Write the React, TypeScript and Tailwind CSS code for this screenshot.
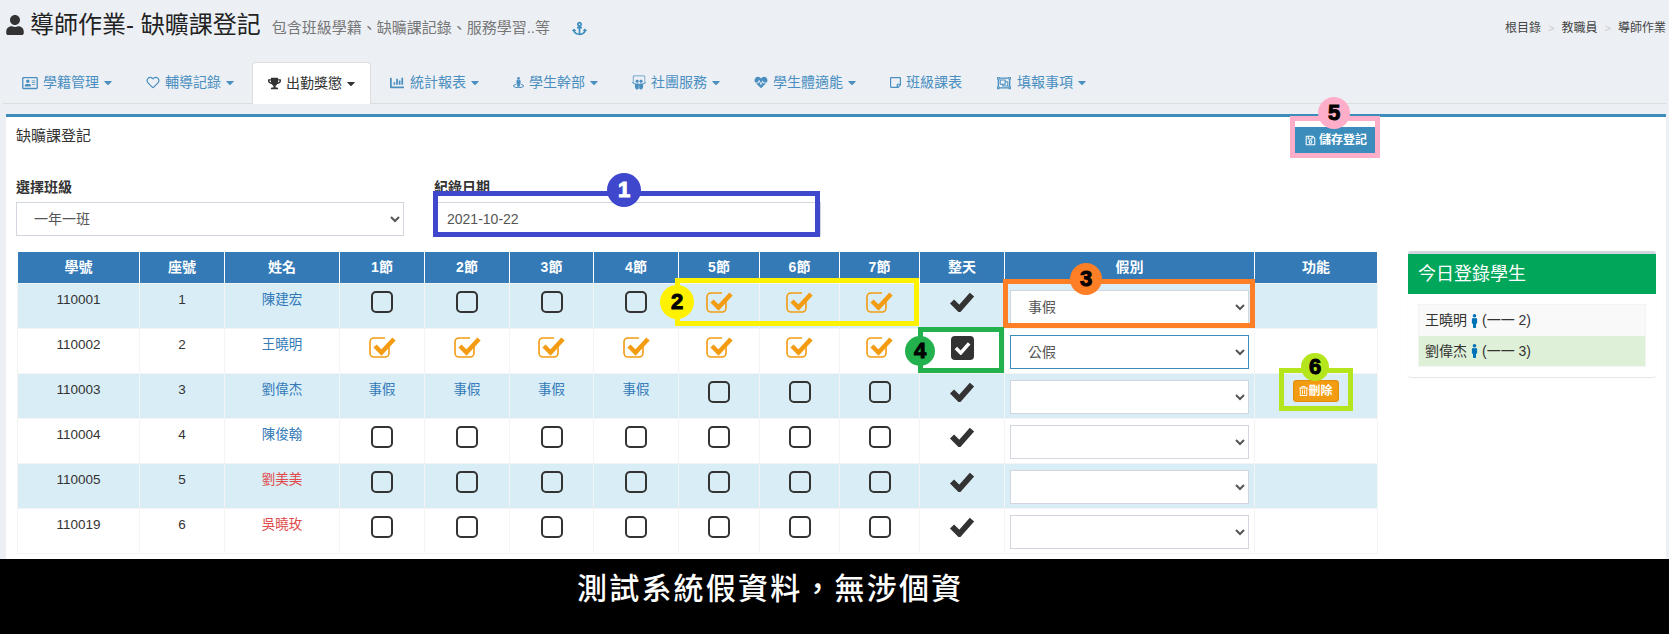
import React from "react";
import {
  FaUser, FaAnchor, FaRegAddressCard, FaRegHeart, FaTrophy, FaChartBar, FaStreetView, FaSlideshare,
  FaHeartbeat, FaRegStickyNote, FaRegObjectGroup, FaCaretDown, FaRegSave, FaRegTrashAlt, FaMale,
} from "react-icons/fa";

const widths = [122, 85, 115, 85, 85, 84, 85, 81, 80, 80, 85, 250, 123];
const heads = ["學號", "座號", "姓名", "1節", "2節", "3節", "4節", "5節", "6節", "7節", "整天", "假別", "功能"];

type Row = { id: string; seat: string; name: string; red?: boolean; cells: (0 | 1 | 2)[]; full?: boolean; leave: string; focus?: boolean; del?: boolean };
const rows: Row[] = [
  { id: "110001", seat: "1", name: "陳建宏", cells: [0, 0, 0, 0, 1, 1, 1], leave: "事假" },
  { id: "110002", seat: "2", name: "王曉明", cells: [1, 1, 1, 1, 1, 1, 1], full: true, leave: "公假", focus: true },
  { id: "110003", seat: "3", name: "劉偉杰", cells: [2, 2, 2, 2, 0, 0, 0], leave: "", del: true },
  { id: "110004", seat: "4", name: "陳俊翰", cells: [0, 0, 0, 0, 0, 0, 0], leave: "" },
  { id: "110005", seat: "5", name: "劉美美", red: true, cells: [0, 0, 0, 0, 0, 0, 0], leave: "" },
  { id: "110019", seat: "6", name: "吳曉玫", red: true, cells: [0, 0, 0, 0, 0, 0, 0], leave: "" },
];

function Box() {
  return <span className="block mx-auto w-[22px] h-[22px] rounded-[5px] border-2 border-[#333333]" />;
}
function Ticked() {
  return (
    <svg width="27" height="23" viewBox="0 0 27 23" fill="none" className="block mx-auto">
      <path d="M20 10.5V17a4 4 0 0 1-4 4H5a4 4 0 0 1-4-4V6a4 4 0 0 1 4-4h11" stroke="#f39c12" strokeWidth="1.6" />
      <path d="M6 10l6.500 6.500L25 3" stroke="#f39c12" strokeWidth="4.500" />
    </svg>
  );
}
function BigCheck() {
  return (
    <svg width="26" height="21" viewBox="0 0 24 20" fill="none" className="block mx-auto">
      <path d="M2.500 10l7 7L21.500 3.500" stroke="#333333" strokeWidth="5.500" />
    </svg>
  );
}
function Tab({ icon, label, caret = true, active = false }: { icon: React.ReactNode; label: string; caret?: boolean; active?: boolean }) {
  return (
    <div
      className={
        active
          ? "flex items-center h-[42px] px-[15px] gap-[5px] bg-white rounded-t-[4px] border border-b-0 border-[#dddddd] text-[#333333] -mb-px -mx-px"
          : "flex items-center h-[41px] px-[15px] gap-[5px] text-[#4b8fc0]"
      }
    >
      <span className="flex items-center justify-center">{icon}</span>
      <span className="text-[14px] whitespace-nowrap">{label}</span>
      {caret && <FaCaretDown className="w-[8px] h-[13px]" />}
    </div>
  );
}
function Badge({ className, text, textClass = "text-black" }: { className: string; text: string; textClass?: string }) {
  return (
    <div className={"absolute rounded-full flex items-center justify-center font-bold text-[22px] leading-none [-webkit-text-stroke:1px] " + textClass + " " + className}>
      {text}
    </div>
  );
}

export default function App() {
  return (
    <div className="relative w-[1669px] h-[634px] overflow-hidden flex flex-col bg-[#ecf0f5] text-[#333333] font-['Liberation_Sans','Noto_Sans_CJK_TC',sans-serif]">
      <div className="h-[559px] overflow-hidden">
        <header className="flex items-start justify-between h-[62px] pl-[6px] pr-[3px]">
          <div className="flex items-baseline pt-[10px]">
            <FaUser className="w-[18px] h-[20px] self-center mr-[6px]" />
            <h1 className="text-[24px] leading-[30px] text-[#222222]">導師作業- 缺曠課登記</h1>
            <span className="text-[15px] text-[#777777] ml-[11px]">包含班級學籍、缺曠課記錄、服務學習..等</span>
            <FaAnchor className="w-[15px] h-[15px] ml-[22px] text-[#3c8dbc] self-center mt-[6px]" />
          </div>
          <div className="flex items-center text-[12px] pt-[19px] text-[#444444]">
            <span>根目錄</span>
            <span className="text-[#cccccc] mx-[7px] text-[11px]">&gt;</span>
            <span>教職員</span>
            <span className="text-[#cccccc] mx-[7px] text-[11px]">&gt;</span>
            <span>導師作業</span>
          </div>
        </header>

        <nav className="flex items-end gap-[4px] h-[42px] mx-[3px] pl-[4px] border-b border-[#dddddd]">
          <Tab icon={<FaRegAddressCard className="w-[16px] h-[14px]" />} label="學籍管理" />
          <Tab icon={<FaRegHeart className="w-[14px] h-[13px]" />} label="輔導記錄" />
          <Tab active icon={<FaTrophy className="w-[13px] h-[13px]" />} label="出勤獎懲" />
          <Tab icon={<FaChartBar className="w-[16px] h-[14px]" />} label="統計報表" />
          <Tab icon={<FaStreetView className="w-[11px] h-[15px]" />} label="學生幹部" />
          <Tab icon={<FaSlideshare className="w-[14px] h-[15px]" />} label="社團服務" />
          <Tab icon={<FaHeartbeat className="w-[14px] h-[13px]" />} label="學生體適能" />
          <Tab caret={false} icon={<FaRegStickyNote className="w-[11px] h-[13px]" />} label="班級課表" />
          <Tab icon={<FaRegObjectGroup className="w-[16px] h-[14px]" />} label="填報事項" />
        </nav>

        <main className="mt-[10px] ml-[6px] w-[1660px] h-[445px] bg-white border-t-[3px] border-[#3c8dbc] flex pl-[10px]">
          <div className="w-[1362px] shrink-0">
            <div className="flex items-start justify-between w-[1359px] pt-[10px] h-[36px]">
              <div className="text-[15px] leading-[18px] text-[#333333]">缺曠課登記</div>
              <button className="flex items-center justify-start pl-[10px] gap-[3px] w-[80px] h-[26px] bg-[#3c8dbc] text-white text-[12px] font-bold">
                <FaRegSave className="w-[11px] h-[11px]" />
                儲存登記
              </button>
            </div>
            <div className="flex gap-[30px] mt-[25px]">
              <label className="block w-[388px]">
                <div className="text-[14px] leading-[18px] font-bold mb-[6px]">選擇班級</div>
                <select defaultValue="一年一班" className="w-full h-[34px] border border-[#d2d6de] bg-white text-[14px] text-[#555555] pl-[13px]">
                  <option>一年一班</option>
                </select>
              </label>
              <label className="block w-[387px]">
                <div className="text-[14px] leading-[18px] font-bold mb-[6px]">紀錄日期</div>
                <input readOnly value="2021-10-22" className="w-full h-[34px] border border-[#d2d6de] bg-white text-[14px] text-[#555555] pl-[12px]" />
              </label>
            </div>
            <table className="mt-[16px] ml-px table-fixed border-collapse w-[1360px] text-[13.500px] text-center">
              <colgroup>
                {widths.map((w, i) => (
                  <col key={i} width={w} />
                ))}
              </colgroup>
              <thead>
                <tr className="h-[31px] bg-[#337ab7] text-white">
                  {heads.map((h) => (
                    <th key={h} className="border-x border-white font-bold text-[14px] p-0">
                      {h}
                    </th>
                  ))}
                </tr>
              </thead>
              <tbody>
                {rows.map((r, i) => (
                  <tr key={r.id} className={i % 2 === 0 ? "h-[45px] bg-[#d9edf7]" : "h-[45px] bg-white"}>
                    <td className="border border-[#f4f4f4] align-top pt-[7px] leading-[18px]">{r.id}</td>
                    <td className="border border-[#f4f4f4] align-top pt-[7px] leading-[18px]">{r.seat}</td>
                    <td className={"border border-[#f4f4f4] align-top pt-[7px] leading-[18px] " + (r.red ? "text-[#e04b4b]" : "text-[#337ab7]")}>{r.name}</td>
                    {r.cells.map((c, k) => (
                      <td key={k} className="border border-[#f4f4f4] align-top leading-[18px] text-[#337ab7] pt-[7px]">
                        {c === 0 ? <Box /> : c === 1 ? <Ticked /> : "事假"}
                      </td>
                    ))}
                    <td className="border border-[#f4f4f4] align-top pt-[7px]">
                      {r.full ? (
                        <span className="flex items-center justify-center mx-auto w-[23px] h-[24px] rounded-[4px] bg-[#333333]">
                          <svg width="17" height="14" viewBox="0 0 24 20" fill="none">
                            <path d="M2.500 10l7 7L21.500 3.500" stroke="#ffffff" strokeWidth="5" />
                          </svg>
                        </span>
                      ) : (
                        <BigCheck />
                      )}
                    </td>
                    <td className="border border-[#f4f4f4] align-top pt-[6px] px-[5px]">
                      <select
                        defaultValue={r.leave}
                        className={"w-[239px] h-[34px] block border bg-white text-[14px] text-[#555555] pl-[13px] " + (r.focus ? "border-[#3c8dbc]" : "border-[#d2d6de]")}
                      >
                        <option value=""></option>
                        <option>事假</option>
                        <option>公假</option>
                      </select>
                    </td>
                    <td className="border border-[#f4f4f4] align-top pt-[6px]">
                      {r.del && (
                        <button className="inline-flex items-center justify-center w-[46px] h-[22px] rounded-[3px] bg-[#f39c12] border border-[#e08e0b] text-white text-[12px] font-bold">
                          <FaRegTrashAlt className="w-[9px] h-[10px]" />
                          刪除
                        </button>
                      )}
                    </td>
                  </tr>
                ))}
              </tbody>
            </table>
          </div>

          <aside className="ml-[30px] mt-[134px] w-[248px] h-[126px] rounded-[3px] bg-white border-t-[3px] border-[#d2d6de] shadow-[0_1px_1px_rgba(0,0,0,0.1)]">
            <div className="h-[40px] bg-[#00a65a] text-white text-[18px] leading-[40px] px-[10px]">今日登錄學生</div>
            <div className="m-[10px] border border-[#f4f4f4] text-[14px]">
              <div className="flex items-center h-[31px] px-[6px] bg-[#f9f9f9]">
                王曉明
                <FaMale className="w-[9px] h-[14px] mx-[3px] text-[#0073b7]" />
                (一一 2)
              </div>
              <div className="flex items-center h-[30px] px-[6px] bg-[#dff0d8]">
                劉偉杰
                <FaMale className="w-[9px] h-[14px] mx-[3px] text-[#0073b7]" />
                (一一 3)
              </div>
            </div>
          </aside>
        </main>
      </div>

      <footer className="flex-1 bg-black flex items-center justify-start text-white font-medium text-[30px] tracking-[2.200px] pb-[16px] pl-[577px]">
        測試系統假資料，無涉個資
      </footer>

      <div className="absolute left-[433px] top-[191px] w-[387px] h-[46px] border-[5px] border-[#3f48cc]" />
      <Badge className="left-[607px] top-[173px] w-[34px] h-[34px] bg-[#3f48cc]" text="1" textClass="text-white" />
      <div className="absolute left-[675px] top-[278px] w-[244px] h-[48px] border-[5px] border-[#fff200]" />
      <Badge className="left-[660px] top-[285px] w-[34px] h-[34px] bg-[#fff200]" text="2" />
      <div className="absolute left-[1003px] top-[279px] w-[252px] h-[49px] border-[5px] border-[#ff7f27]" />
      <Badge className="left-[1070px] top-[263px] w-[32px] h-[32px] bg-[#ff7f27]" text="3" />
      <div className="absolute left-[918px] top-[327px] w-[86px] h-[46px] border-[5px] border-[#22b14c]" />
      <Badge className="left-[905px] top-[336px] w-[30px] h-[30px] bg-[#22b14c]" text="4" />
      <div className="absolute left-[1290px] top-[116px] w-[90px] h-[42px] border-[5px] border-[#ffaec9]" />
      <Badge className="left-[1318px] top-[97px] w-[32px] h-[32px] bg-[#ffaec9]" text="5" />
      <div className="absolute left-[1279px] top-[368px] w-[74px] h-[43px] border-[5px] border-[#b5e61d]" />
      <Badge className="left-[1301px] top-[353px] w-[28px] h-[28px] bg-[#b5e61d]" text="6" />
    </div>
  );
}
